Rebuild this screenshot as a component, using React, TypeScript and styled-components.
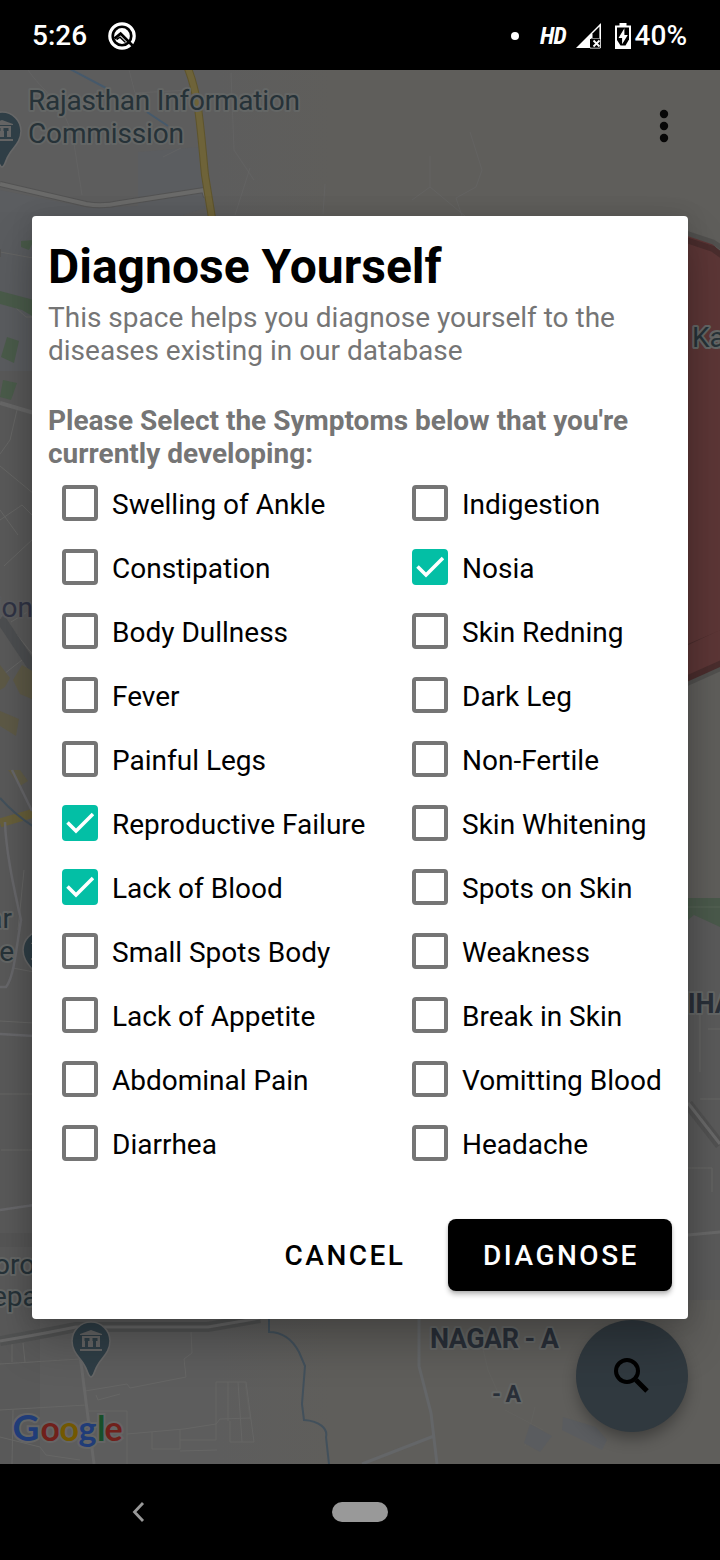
import React, { useState } from "react";
import styled, { createGlobalStyle } from "styled-components";

const GlobalStyle = createGlobalStyle`
  *, *::before, *::after { box-sizing: border-box; }
  body { margin: 0; background: #000; font-family: Roboto, "Liberation Sans", sans-serif; }
`;

const Screen = styled.div`
  width: 720px;
  height: 1560px;
  display: flex;
  flex-direction: column;
  overflow: hidden;
  background: #000;
`;

const StatusBar = styled.header`
  height: 70px;
  flex: none;
  display: flex;
  align-items: center;
  padding: 2px 33px 0 32px;
  color: #fff;
  font-size: 28px;
  font-weight: 500;
  line-height: 34px;
`;

const Clock = styled.span`
  margin-right: 21px;
`;

const StatusIcons = styled.div`
  margin-left: auto;
  display: flex;
  align-items: center;
`;

const NoticeDot = styled.span`
  width: 8px;
  height: 8px;
  margin-right: 21px;
  border-radius: 50%;
  background: #fff;
`;

const HdLabel = styled.span`
  margin-right: 10px;
  font-family: "Roboto Condensed", Roboto, sans-serif;
  font-size: 24px;
  font-weight: 700;
  font-style: italic;
  letter-spacing: -1px;
`;

const MapArea = styled.main`
  position: relative;
  flex: 1;
  overflow: hidden;
  background: #5d5d5d;
`;

const MapCanvas = styled.svg`
  display: block;
  width: 720px;
  height: 1394px;
`;

const DialogLayer = styled.div`
  position: absolute;
  inset: 0;
  display: flex;
  align-items: center;
  justify-content: center;
`;

const Dialog = styled.section`
  width: 656px;
  height: 1103px;
  display: flex;
  flex-direction: column;
  padding: 22px 16px 28px;
  border-radius: 4px;
  background: #fff;
  box-shadow: 0 24px 44px rgba(0, 0, 0, 0.24), 0 0 22px rgba(0, 0, 0, 0.12);
`;

const Title = styled.h1`
  margin: 0;
  font-size: 48px;
  font-weight: 700;
  line-height: 57px;
  color: #000;
`;

const Copy = styled.p<{ $strong?: boolean }>`
  margin: ${(p) => (p.$strong ? "37px 0 0" : "6px 0 0")};
  font-size: 28px;
  line-height: 33px;
  font-weight: ${(p) => (p.$strong ? 700 : 400)};
  color: #757575;
  white-space: nowrap;
`;

const SymptomGrid = styled.div`
  margin-top: 1px;
  display: grid;
  grid-template-columns: 350px 1fr;
  grid-auto-rows: 64px;
`;

const Symptom = styled.label`
  display: flex;
  align-items: center;
  padding-left: 14px;
  gap: 14px;
  font-size: 28px;
  line-height: 33px;
  color: #000;
  white-space: nowrap;
  cursor: pointer;
`;

const SymptomName = styled.span`
  padding-top: 3px;
`;

const HiddenInput = styled.input`
  appearance: none;
  width: 0;
  height: 0;
  margin: 0 -14px 0 0;
`;

const CheckMark = styled.span<{ $checked: boolean }>`
  flex: none;
  width: 36px;
  height: 36px;
  border: 4px solid ${(p) => (p.$checked ? "#03bfa5" : "#757575")};
  border-radius: 4px;
  background: ${(p) => (p.$checked ? "#03bfa5" : "#fff")};
  svg { display: block; }
`;

const Actions = styled.footer`
  margin-top: auto;
  display: flex;
  justify-content: flex-end;
  gap: 10px;
`;

const ActionButton = styled.button<{ $filled?: boolean }>`
  width: ${(p) => (p.$filled ? 224 : 188)}px;
  height: 72px;
  padding: 2px 0 0 2px;
  border: 0;
  border-radius: 8px;
  font: 500 28px/33px Roboto, sans-serif;
  letter-spacing: 2.5px;
  color: ${(p) => (p.$filled ? "#fff" : "#000")};
  background: ${(p) => (p.$filled ? "#000" : "transparent")};
  box-shadow: ${(p) => (p.$filled ? "0 4px 5px rgba(0,0,0,.22), 0 1px 3px rgba(0,0,0,.15)" : "none")};
`;

const NavBar = styled.nav`
  height: 96px;
  flex: none;
  display: flex;
  align-items: center;
  padding-left: 130px;
  gap: 184px;
  background: #000;
`;

const HomePill = styled.span`
  width: 56px;
  height: 20px;
  border-radius: 10px;
  background: #999;
`;

const rows: [string, string][] = [
  ["Swelling of Ankle", "Indigestion"],
  ["Constipation", "Nosia"],
  ["Body Dullness", "Skin Redning"],
  ["Fever", "Dark Leg"],
  ["Painful Legs", "Non-Fertile"],
  ["Reproductive Failure", "Skin Whitening"],
  ["Lack of Blood", "Spots on Skin"],
  ["Small Spots Body", "Weakness"],
  ["Lack of Appetite", "Break in Skin"],
  ["Abdominal Pain", "Vomitting Blood"],
  ["Diarrhea", "Headache"],
];

function AndroidQIcon() {
  return (
    <svg width="28" height="28" viewBox="0 0 28 28" fill="none">
      <circle cx="14" cy="14" r="12.2" stroke="#fff" strokeWidth="3.2" />
      <circle cx="14" cy="14" r="7.9" fill="#fff" />
      <path d="M6.5 16.5 12.6 11.6 24.5 23.5" stroke="#000" strokeWidth="2.8" />
      <path d="M8.5 17.5 12 15.2 17.5 20.5" stroke="#000" strokeWidth="1.5" />
    </svg>
  );
}

function SignalIcon() {
  return (
    <svg width="26" height="26" viewBox="0 0 26 26" fill="none">
      <path d="M0 25 25 0V16H14V25Z" fill="#fff" />
      <path d="M16.5 10.5 23.5 3.5V15H16.5Z" fill="#000" />
      <path d="M24.3 1V25H14" stroke="#fff" strokeWidth="1" />
      <path d="M15 15.5h8.8v9H15z" fill="#000" />
      <path d="m17.5 17.5 6 6m0-6-6 6" stroke="#fff" strokeWidth="1.8" />
    </svg>
  );
}

function BatteryIcon() {
  return (
    <svg width="16" height="26" viewBox="0 0 16 26">
      <path d="M4.5 0h7v2.5H16V26H0V2.5h4.5Z" fill="#fff" />
      <path d="M2 4.5h12v12l-3.5 6h-5L2 17Z" fill="#000" />
      <path d="M9.4 5.2 3.5 15h3.6v6.2L12.8 12H9.4Z" fill="#fff" />
    </svg>
  );
}

function Pin({ x, y }: { x: number; y: number }) {
  return (
    <g transform={`translate(${x} ${y})`}>
      <path
        d="M0 36C-3 36-3 29-8 22C-13 15-19 10-19 0A19 19 0 0 1 19 0C19 10 13 15 8 22C3 29 3 36 0 36Z"
        fill="#2f3e46"
        stroke="#676767"
        strokeWidth="1.6"
      />
      <path d="M-11-6v-1L0-11l11 4v1ZM-9-5H9V6H5V0H2V6h-5V0h-3V6h-3ZM-11 8h22v2h-22Z" fill="#646464" />
      <path d="M-6.5-3h5v3h-5ZM1.5-3h5v3h-5Z" fill="#2f3e46" />
    </g>
  );
}

function CityMap() {
  return (
    <MapCanvas viewBox="0 70 720 1394" fill="none">
      <defs>
        <linearGradient id="land" x1="0" x2="1" y1="0" y2="0">
          <stop offset="0" stopColor="#5d5d5d" />
          <stop offset=".3" stopColor="#5d5d5d" />
          <stop offset=".46" stopColor="#5f5e5b" />
          <stop offset="1" stopColor="#5f5e5b" />
        </linearGradient>
        <filter id="fabShadow" x="-30%" y="-30%" width="160%" height="160%">
          <feGaussianBlur stdDeviation="8" />
        </filter>
      </defs>
      <rect y="70" width="720" height="1394" fill="url(#land)" />
      <path d="M138 152 200 147 205 208 174 218H0V190L90 208 138 206Z" fill="#5b5d60" />
      <path d="M0 212H40V372H0Z" fill="#5a5c5f" />
      <path d="M0 371H40V1464H0Z" fill="#595959" />
      <path d="M688 898H720V1300H688Z" fill="#5a5a5a" />

      <g stroke="#666665" strokeWidth="1">
        <path d="M28 70C42 91 62 100 73 137L82 195M129 70 135 93 190 90M163 157 181 148M231 73 234 150 254 180M250 168 235 215M325 184 323 214M430 156V187L465 216M430 187 412 200M470 132 482 170 476 187 456 198 462 216" opacity=".65" />
        <path d="M0 252 33 258M0 303 15 307 26 317H34M0 466 34 494M17 410 10 440 0 454M0 510 18 535M11 622 34 608M0 614 34 656M22 660 0 677M0 520l22-15 12 12M4 566l30-28" />
        <path d="M0 1021 34 1023M24 870 18 930M13 968 34 972M0 1094h34M1 1150h33M690 992h10v80M700 1099h20M688 1168h24v24M708 1029h12" />
        <path d="M0 1364 80 1359M85 1391 127 1384 130 1388 186 1377 184 1359 192 1353 191 1331M0 1410 86 1405M89 1411H127V1464M127 1434 184 1429 216 1424 220 1419 251 1418M152 1432V1449H180V1430M180 1440H216V1382H246L254 1442H230L230 1421M228 1382 228 1421M238 1382 242 1442M180 1451 217 1450M13 1410 12 1464M0 1437 40 1447 46 1455 80 1460M12 1344V1362M23 1343 25 1362M96 1395 98 1400 120 1394" />
        <path d="M235 1382h10l5 37M482 1345 488 1370 499 1395M535 1407 525 1446M505 1410 543 1430" opacity=".4" />
      </g>
      <g stroke="#545454" strokeWidth="8" strokeLinejoin="round">
        <path d="M-5 252 0 253" />
        <path d="M0 253 1 253" />
      </g>
      <path d="M0 254" stroke="#666" />
      <g strokeLinejoin="round">
        <path d="M0 253" stroke="#666" />
        <path d="M0 184 86 204Q102 207 120 203L204 190 206 197" stroke="#535353" strokeWidth="6" />
        <path d="M0 184 86 204Q102 207 120 203L204 190 206 197" stroke="#6a6a69" strokeWidth="4" />
      </g>
      <path d="M187 66C199 95 200 124 205 175L212 218" stroke="#5e542c" strokeWidth="8" />
      <path d="M187 66C199 95 200 124 205 175L212 218" stroke="#6e6339" strokeWidth="6" />
      <path d="M70 69 106 88M147 112 168 126" stroke="#46596b" strokeWidth="2" />
      <path d="M0 291 34 300V317L22 310 0 304ZM21 241 34 240 29 250 21 247ZM7 337 19 341 14 363 1 357ZM3 380 17 383 11 400 0 397Z" fill="#4a5b4a" />
      <path d="M0 403 34 413" stroke="#676767" strokeWidth="4" />
      <path d="M0 618 34 669" stroke="#4c4e50" strokeWidth="10" />
      <path d="M0 665 10 678 5 687 0 690ZM13 680 22 665 34 672V700L20 694ZM0 711 19 719 16 736 0 726Z" fill="#5d5946" />
      <path d="M8 770 20 786 28 781 20 770Z" fill="#605c47" />
      <path d="M0 823 34 813" stroke="#675f3a" strokeWidth="9" />
      <path d="M0 798Q14 814 34 827" stroke="#42505b" strokeWidth="2" />
      <path d="M12 770 32 811M5 822C6 850 12 880 21 920 16 950 14 977 6 987H0M0 1034 34 1036M0 1210 34 1205" stroke="#67676a" strokeWidth="2.5" />
      <path d="M0 1240H34" stroke="#555" strokeWidth="14" />
      <path d="M0 1341Q42 1334 76 1327H208L260 1318" stroke="#515252" strokeWidth="10" />
      <path d="M0 1341Q42 1334 76 1327H208L260 1318M80 1355 94 1464" stroke="#676767" strokeWidth="3" />
      <path d="M269 1318V1332C283 1332 292 1339 299 1352L305 1366 302 1404 304 1420C320 1421 328 1429 326 1437L329 1464" stroke="#42505b" strokeWidth="2" />
      <path d="M419 1316V1366L431 1413 437 1464M362 1464 434 1436" stroke="#646668" strokeWidth="3" />
      <path d="M563 1417 596 1427 607 1440 602 1450 562 1430ZM530 1424 552 1436 540 1452 524 1443Z" fill="#5a5c5f" />

      <path d="M688 235 713 244 724 257V631L688 652Z" fill="#5c3636" />
      <path d="M686 240 713 249 724 257M686 648 724 632" stroke="#4a2d2d" strokeWidth="6" />
      <path d="M686 233 713 242 724 249" stroke="#51504e" strokeWidth="5" />
      <path d="M686 681 724 664V628L686 646Z" fill="#5c3636" />
      <path d="M686 684 724 667" stroke="#51504e" strokeWidth="5" />
      <path d="M686 679 724 662" stroke="#4a2d2d" strokeWidth="6" />
      <path d="M688 898H720V927L694 915 688 920Z" fill="#4a594b" />
      <path d="M688 907H720" stroke="#566456" />
      <path d="m688 1104 32 41" stroke="#515151" strokeWidth="10" />
      <path d="m688 1103 32 41M688 1235 720 1232" stroke="#686868" strokeWidth="3" />

      <g
        fill="#263238"
        stroke="#646665"
        strokeWidth="4"
        strokeLinejoin="round"
        paintOrder="stroke"
        fontFamily="Roboto, sans-serif"
        fontSize="28"
      >
        <text x="28" y="110" textLength="272">Rajasthan Information</text>
        <text x="28" y="143" textLength="156">Commission</text>
        <text x="692" y="347">Kathputli</text>
        <text x="33" y="617" textAnchor="end" fill="#303344" stroke="#5b5b5d">Station</text>
        <text x="12" y="928" textAnchor="end">Bazaar</text>
        <text x="14" y="961" textAnchor="end">Office</text>
        <text x="-6" y="1274">oron</text>
        <text x="-8" y="1306">epart</text>
        <g fontWeight="700" fill="#292f38">
          <text x="430" y="1348" fontSize="27" textLength="129">NAGAR - A</text>
          <text x="492" y="1402" fontSize="23" textLength="29">- A</text>
          <text x="670" y="1013" fontSize="27">VIHAR</text>
        </g>
      </g>
      <Pin x={2} y={131} />
      <Pin x={91} y={1341} />
      <Pin x={42} y={950} />
      <g fontFamily="Lato, sans-serif" fontSize="37" fontWeight="700" stroke="#656565" strokeWidth="4" paintOrder="stroke">
        <text x="12.5" y="1441" fill="#203c78">G</text>
        <text x="40.5" y="1441" fontSize="34" fill="#70201b">o</text>
        <text x="59.5" y="1441" fontSize="34" fill="#735800">o</text>
        <text x="78.5" y="1441" fontSize="34" fill="#203c78">g</text>
        <text x="97" y="1441" fontSize="34" fill="#174f29">l</text>
        <text x="104.5" y="1441" fontSize="34" fill="#70201b">e</text>
      </g>

      <g fill="#070707">
        <circle cx="664" cy="114" r="4.2" />
        <circle cx="664" cy="126" r="4.2" />
        <circle cx="664" cy="138" r="4.2" />
      </g>
      <circle cx="632" cy="1384" r="54" fill="#000" opacity=".35" filter="url(#fabShadow)" />
      <circle cx="632" cy="1376" r="56" fill="#30393f" />
      <circle cx="627" cy="1371" r="11" stroke="#000" strokeWidth="4" />
      <path d="m636 1380 11 11" stroke="#000" strokeWidth="5" />
    </MapCanvas>
  );
}

function SymptomOption({ name, initial }: { name: string; initial: boolean }) {
  const [checked, setChecked] = useState(initial);
  return (
    <Symptom>
      <HiddenInput type="checkbox" checked={checked} onChange={() => setChecked(!checked)} />
      <CheckMark $checked={checked}>
        {checked && (
          <svg width="28" height="28" viewBox="0 0 28 28" fill="none">
            <path d="m1.5 13.5 8.5 8.5L27 5" stroke="#fff" strokeWidth="3.6" />
          </svg>
        )}
      </CheckMark>
      <SymptomName>{name}</SymptomName>
    </Symptom>
  );
}

const selected = ["Nosia", "Reproductive Failure", "Lack of Blood"];

export default function App() {
  return (
    <Screen>
      <GlobalStyle />
      <StatusBar>
        <Clock>5:26</Clock>
        <AndroidQIcon />
        <StatusIcons>
          <NoticeDot />
          <HdLabel>HD</HdLabel>
          <SignalIcon />
          <svg width="13" height="1" />
          <BatteryIcon />
          <svg width="4" height="1" />
          <span>40%</span>
        </StatusIcons>
      </StatusBar>
      <MapArea>
        <CityMap />
        <DialogLayer>
          <Dialog>
            <Title>Diagnose Yourself</Title>
            <Copy>
              This space helps you diagnose yourself to the
              <br />
              diseases existing in our database
            </Copy>
            <Copy $strong>
              Please Select the Symptoms below that you're
              <br />
              currently developing:
            </Copy>
            <SymptomGrid>
              {rows.flat().map((name) => (
                <SymptomOption key={name} name={name} initial={selected.includes(name)} />
              ))}
            </SymptomGrid>
            <Actions>
              <ActionButton>CANCEL</ActionButton>
              <ActionButton $filled>DIAGNOSE</ActionButton>
            </Actions>
          </Dialog>
        </DialogLayer>
      </MapArea>
      <NavBar>
        <svg width="18" height="22" viewBox="0 0 18 22" fill="none">
          <path d="M13 2 4.5 11 13 20" stroke="#999" strokeWidth="2.8" />
        </svg>
        <HomePill />
      </NavBar>
    </Screen>
  );
}
